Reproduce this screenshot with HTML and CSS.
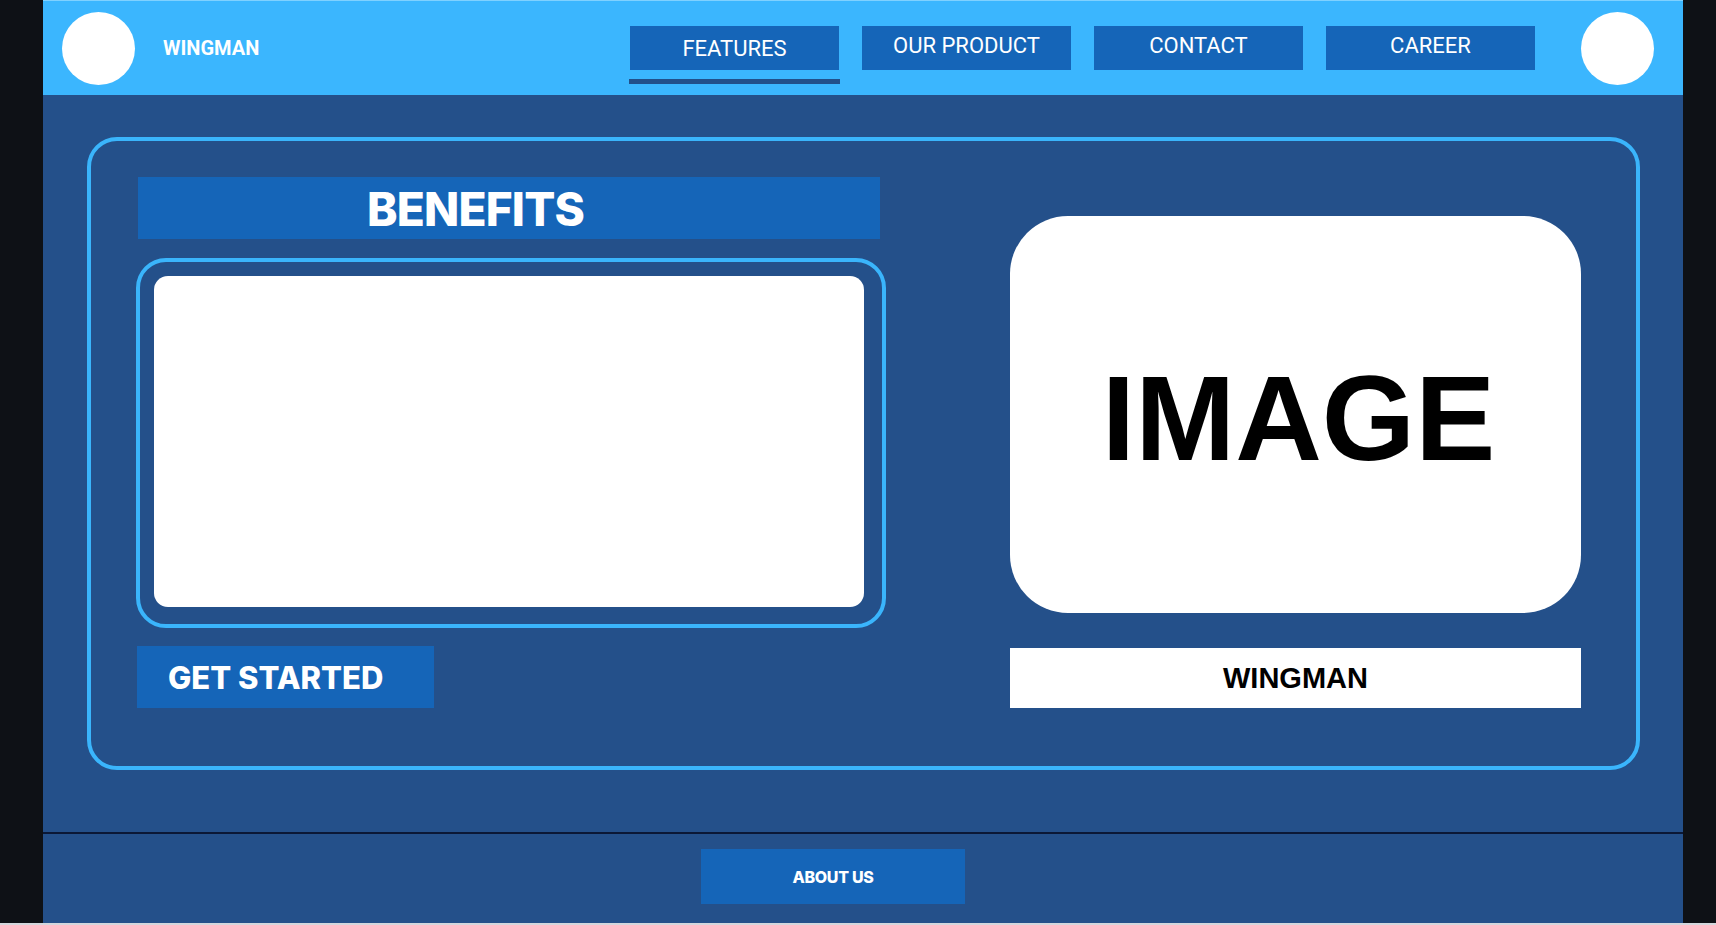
FILE: index.html
```html
<!DOCTYPE html>
<html lang="en">
<head>
<meta charset="utf-8">
<title>Wingman</title>
<link rel="stylesheet" href="styles.css">
</head>
<body>
<div class="screen">
  <div class="page">
    <header class="topbar">
      <div class="avatar"></div>
      <div class="brand">WINGMAN</div>
      <nav class="nav">
        <a class="nav-btn active">FEATURES</a>
        <a class="nav-btn">OUR PRODUCT</a>
        <a class="nav-btn">CONTACT</a>
        <a class="nav-btn">CAREER</a>
      </nav>
      <div class="avatar avatar-right"></div>
    </header>
    <main class="main">
      <section class="panel">
        <div class="col-left">
          <div class="benefits">BENEFITS</div>
          <div class="frame"><div class="frame-fill"></div></div>
          <div class="cta">GET STARTED</div>
        </div>
        <div class="col-right">
          <div class="image-box">IMAGE</div>
          <div class="name-bar">WINGMAN</div>
        </div>
      </section>
    </main>
    <footer class="footer">
      <div class="about">ABOUT US</div>
    </footer>
  </div>
</div>
</body>
</html>
```
FILE: styles.css
```css
* { box-sizing: border-box; }
html { background: #d3d7dd; }
body { margin: 0; height: 925px; overflow: hidden; }

.screen {
  height: 923px;
  background: #0e1116;
  display: flex;
}
.page {
  margin-left: 43px;
  width: 1640px;
  display: flex;
  flex-direction: column;
  background: #24508a;
}

.topbar {
  height: 95px;
  background: #3bb6fe;
  border-top: 1px solid #7fd1ff;
  display: flex;
  align-items: center;
  padding: 0 29px 0 19px;
}
.avatar {
  width: 73px;
  height: 73px;
  border-radius: 50%;
  background: #ffffff;
  flex: none;
}
.avatar-right { margin-left: 46px; }
.brand {
  margin-left: 28px;
  font-family: Roboto, "Liberation Sans", sans-serif;
  font-weight: 700;
  font-size: 20px;
  color: #ffffff;
}
.nav {
  margin-left: auto;
  display: flex;
  gap: 23px;
}
.nav-btn {
  position: relative;
  width: 209px;
  height: 44px;
  background: #1565b8;
  color: #ffffff;
  font-family: Roboto, "Liberation Sans", sans-serif;
  font-size: 22px;
  display: flex;
  align-items: center;
  justify-content: center;
  padding-bottom: 6px;
}
.nav-btn.active { padding-bottom: 0; }
.nav-btn.active::after {
  content: "";
  position: absolute;
  left: -1px;
  right: -1px;
  top: 53px;
  height: 5px;
  background: #22508a;
}

.main {
  height: 737px;
  padding: 42px 0 0 44px;
}
.panel {
  width: 1553px;
  height: 633px;
  border: 4px solid #3ab5fc;
  border-radius: 30px;
  padding: 36px 55px 0 45px;
  display: grid;
  grid-template-columns: 750px 571px;
  column-gap: 124px;
  align-items: start;
}
.col-left {
  display: flex;
  flex-direction: column;
}
.benefits {
  width: 742px;
  height: 62px;
  margin-left: 2px;
  background: #1565b8;
  color: #ffffff;
  font-family: Inter, "Liberation Sans", sans-serif;
  font-weight: 800;
  font-size: 46px;
  letter-spacing: -0.8px;
  display: flex;
  align-items: center;
  padding-left: 229px;
  padding-top: 2px;
}
.frame {
  margin-top: 19px;
  height: 370px;
  border: 4px solid #3ab5fc;
  border-radius: 30px;
  padding: 14px 18px 17px 14px;
}
.frame-fill {
  height: 100%;
  background: #ffffff;
  border-radius: 14px;
}
.cta {
  margin-top: 18px;
  margin-left: 1px;
  width: 297px;
  height: 62px;
  background: #1565b8;
  color: #ffffff;
  font-family: Inter, "Liberation Sans", sans-serif;
  font-weight: 800;
  font-size: 31px;
  display: flex;
  align-items: center;
  padding-left: 31px;
}
.col-right {
  display: flex;
  flex-direction: column;
  padding-top: 39px;
}
.image-box {
  height: 397px;
  background: #ffffff;
  border-radius: 58px;
  display: flex;
  align-items: center;
  justify-content: center;
  padding-left: 6px;
  padding-top: 6px;
  color: #000000;
  font-family: "Liberation Sans", Arial, sans-serif;
  font-weight: 700;
  font-size: 120px;
}
.name-bar {
  margin-top: 35px;
  height: 60px;
  background: #ffffff;
  color: #000000;
  font-family: "Liberation Sans", Arial, sans-serif;
  font-weight: 700;
  font-size: 29px;
  display: flex;
  align-items: center;
  justify-content: center;
}

.footer {
  flex: 1;
  border-top: 2px solid #0b1836;
  padding: 15px 0 0 658px;
}
.about {
  width: 264px;
  height: 55px;
  background: #1565b8;
  color: #ffffff;
  font-family: Inter, "Liberation Sans", sans-serif;
  font-weight: 800;
  font-size: 16px;
  letter-spacing: -0.3px;
  display: flex;
  align-items: center;
  justify-content: center;
}
```
